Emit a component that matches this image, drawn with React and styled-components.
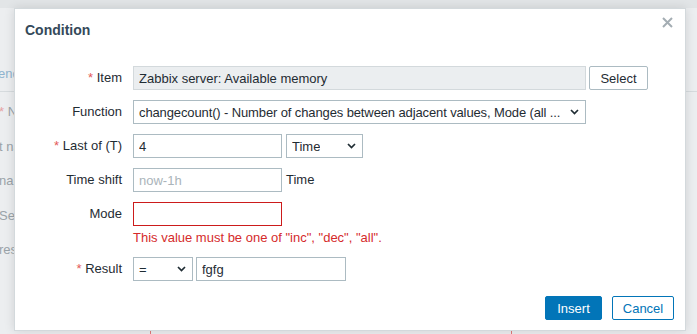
import styled, { createGlobalStyle } from "styled-components";

const GlobalStyle = createGlobalStyle`
  body {
    margin: 0;
    font-family: "Liberation Sans", Arial, sans-serif;
  }
`;

const Chevron = () => (
  <svg width="9" height="6" viewBox="0 0 9 6">
    <polyline
      points="1,1 4.5,4.5 8,1"
      fill="none"
      stroke="#1f2c33"
      strokeWidth="1.7"
    />
  </svg>
);

const CloseIcon = () => (
  <svg width="11" height="11" viewBox="0 0 11 11">
    <path d="M1 1 L10 10 M10 1 L1 10" stroke="#a4adb3" strokeWidth="2" />
  </svg>
);

const App = () => {
  return (
    <Page>
      <GlobalStyle />
      <TopBar />
      <TabRow>
        <TabText>endencies</TabText>
      </TabRow>
      <BgForm>
        <BgRow>
          <BgStar>*</BgStar> Name
        </BgRow>
        <BgRow>t name</BgRow>
        <BgRow>nal data</BgRow>
        <BgRow>Severity</BgRow>
        <BgRow>ression</BgRow>
      </BgForm>
      <BgExpression>
        count(/Zabbix server/vm.memory.size[available],3d6,"all")=1 or last(/Zabbix server/...
      </BgExpression>

      <Modal>
        <Header>
          <Title>Condition</Title>
          <CloseButton>
            <CloseIcon />
          </CloseButton>
        </Header>

        <Form>
          <Label required>Item</Label>
          <Field>
            <Input readOnly value="Zabbix server: Available memory" width={453} />
            <Button>Select</Button>
          </Field>

          <Label>Function</Label>
          <Field>
            <Select width={453} tight>
              <span>
                changecount() - Number of changes between adjacent values, Mode (all ...
              </span>
              <Chevron />
            </Select>
          </Field>

          <Label required>Last of (T)</Label>
          <Field gap={4}>
            <Input value="4" width={149} />
            <Select width={77}>
              <span>Time</span>
              <Chevron />
            </Select>
          </Field>

          <Label>Time shift</Label>
          <Field gap={4}>
            <Input placeholder="now-1h" width={149} />
            <Hint>Time</Hint>
          </Field>

          <Label>Mode</Label>
          <FieldColumn>
            <Input invalid width={149} />
            <ErrorText>This value must be one of "inc", "dec", "all".</ErrorText>
          </FieldColumn>

          <Label required>Result</Label>
          <Field>
            <Select width={60}>
              <span>=</span>
              <Chevron />
            </Select>
            <Input value="fgfg" width={150} />
          </Field>
        </Form>

        <Footer>
          <PrimaryButton>Insert</PrimaryButton>
          <SecondaryButton>Cancel</SecondaryButton>
        </Footer>
      </Modal>
    </Page>
  );
};

export default App;

const Label = ({ required, children }) => (
  <LabelCell>
    {required && <Star>* </Star>}
    {children}
  </LabelCell>
);

const Page = styled.div`
  position: relative;
  width: 697px;
  height: 334px;
  overflow: hidden;
  background-color: #eceef0;
  font-size: 13px;
  color: #9aa3a9;
`;

const TopBar = styled.div`
  height: 8px;
  background-color: #e2e5e7;
`;

const TabRow = styled.div`
  height: 84px;
  display: flex;
  align-items: flex-end;
  padding-bottom: 9px;
  box-sizing: border-box;
  border-bottom: 1px solid #d6dbde;
`;

const TabText = styled.span`
  color: #8fb4cf;
  line-height: 16px;
  margin-left: -2px;
`;

const BgForm = styled.div`
  padding-top: 3px;
`;

const BgRow = styled.div`
  height: 34.5px;
  line-height: 34.5px;
  white-space: nowrap;
  margin-left: -1px;
`;

const BgStar = styled.span`
  color: #e6a3a3;
`;

const BgExpression = styled.div`
  margin: 62px 0 0 150px;
  width: 352px;
  height: 20px;
  padding: 0 4px;
  border-left: 1px solid #e07a7a;
  border-right: 1px solid #e07a7a;
  font-family: "Liberation Mono", monospace;
  font-size: 12px;
  line-height: 20px;
  white-space: nowrap;
  overflow: hidden;
  color: #8d979c;
`;

const Modal = styled.div`
  position: absolute;
  left: 14px;
  top: 8px;
  width: 672px;
  height: 323px;
  box-sizing: border-box;
  background-color: #ffffff;
  border: 1px solid #d3d9dc;
  box-shadow: 0 0 10px rgba(0, 0, 0, 0.12);
  padding: 0 10px 10px;
  display: flex;
  flex-direction: column;
  color: #1f2c33;
`;

const Header = styled.div`
  position: relative;
  height: 57px;
  padding-top: 13px;
  box-sizing: border-box;
`;

const Title = styled.h4`
  margin: 0;
  font-size: 14px;
  line-height: 16px;
  font-weight: 700;
  color: #34495a;
`;

const CloseButton = styled.div`
  position: absolute;
  right: 2px;
  top: 8px;
  display: flex;
`;

const Form = styled.div`
  display: grid;
  grid-template-columns: 97px 1fr;
  column-gap: 11px;
  row-gap: 10px;
  align-items: start;
`;

const LabelCell = styled.div`
  text-align: right;
  line-height: 24px;
  white-space: nowrap;
`;

const Star = styled.span`
  color: #e45959;
`;

const Field = styled.div`
  display: flex;
  align-items: center;
  gap: ${(props) => props.gap || 3}px;
`;

const FieldColumn = styled.div`
  display: flex;
  flex-direction: column;
  align-items: flex-start;
`;

const Input = styled.input.attrs(() => ({ type: "text" }))`
  box-sizing: border-box;
  width: ${(props) => props.width}px;
  height: 24px;
  margin: 0;
  padding: 0 5px;
  font-family: inherit;
  font-size: 13px;
  color: #1f2c33;
  background-color: ${(props) => (props.readOnly ? "#ebeef0" : "#ffffff")};
  border: 1px solid
    ${(props) =>
      props.invalid ? "#cc1b1b" : props.readOnly ? "#d3d9dc" : "#acbbc2"};
  border-radius: 0;
  outline: none;

  &::placeholder {
    color: #aab4ba;
  }
`;

const Select = styled.div`
  box-sizing: border-box;
  width: ${(props) => props.width}px;
  height: 24px;
  padding: 0 6px 0 5px;
  display: flex;
  align-items: center;
  justify-content: space-between;
  gap: 4px;
  border: 1px solid #acbbc2;
  background-color: #ffffff;
  white-space: nowrap;
  overflow: hidden;

  span {
    overflow: hidden;
    letter-spacing: ${(props) => (props.tight ? "-0.12px" : "normal")};
  }

  svg {
    flex-shrink: 0;
  }
`;

const Hint = styled.span`
  line-height: 24px;
`;

const ErrorText = styled.div`
  margin-top: 3px;
  line-height: 18px;
  color: #d52b2b;
  white-space: nowrap;
`;

const Button = styled.button`
  box-sizing: border-box;
  width: 59px;
  height: 24px;
  padding: 0;
  font-family: inherit;
  font-size: 13px;
  color: #1f2c33;
  background-color: #ffffff;
  border: 1px solid #acbbc2;
  border-radius: 2px;
`;

const Footer = styled.div`
  margin-top: auto;
  display: flex;
  justify-content: flex-end;
  gap: 10px;
  padding-right: 1px;
`;

const PrimaryButton = styled.button`
  box-sizing: border-box;
  width: 57px;
  height: 24px;
  padding: 0;
  font-family: inherit;
  font-size: 13px;
  color: #ffffff;
  background-color: #0275b8;
  border: 1px solid #0275b8;
  border-radius: 2px;
`;

const SecondaryButton = styled(PrimaryButton)`
  width: 62px;
  color: #0275b8;
  background-color: #ffffff;
`;
